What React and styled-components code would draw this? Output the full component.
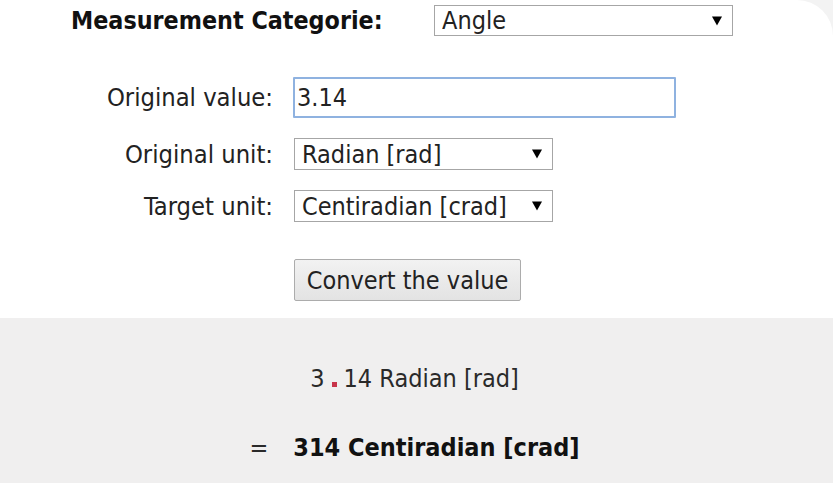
import React from "react";
import styled, { createGlobalStyle } from "styled-components";

const GlobalStyle = createGlobalStyle`
  html, body {
    margin: 0;
    padding: 0;
    background: #f3f3f3;
  }
  body {
    font-family: "DejaVu Sans Condensed", "DejaVu Sans", sans-serif;
    color: #222;
  }
`;

const FONT = `"DejaVu Sans Condensed", "DejaVu Sans", sans-serif`;

const Page = styled.div`
  width: 833px;
  height: 483px;
  display: flex;
  flex-direction: column;
  overflow: hidden;
`;

const Top = styled.section`
  background: #ffffff;
  height: 318px;
  border-top-right-radius: 36px;
  display: flex;
  flex-direction: column;
`;

const CategoryRow = styled.div`
  display: flex;
  align-items: center;
  padding: 5px 0 0 71px;
  height: 31px;
`;

const CategoryLabel = styled.label`
  width: 363px;
  font-family: ${FONT};
  font-weight: bold;
  font-size: 24.8px;
  color: #111;
`;

const Form = styled.div`
  display: grid;
  grid-template-columns: 273px 1fr;
  column-gap: 20px;
  align-items: center;
  margin-top: 41px;
`;

const Label = styled.label`
  text-align: right;
  font-family: ${FONT};
  font-size: 25.3px;
  color: #222;
  margin-top: ${(p) => p.$mt || 0}px;
`;

const Field = styled.div`
  margin-top: ${(p) => p.$mt || 0}px;
  display: flex;
`;

const TextInput = styled.input`
  box-sizing: border-box;
  width: 383px;
  height: 41px;
  border: 2px solid #8fb2e0;
  border-radius: 1px;
  padding: 0 0 0 2px;
  font-family: ${FONT};
  font-size: 25px;
  color: #222;
  outline: none;
  background: #fff;
  caret-color: #000;
`;

const SelectWrap = styled.div`
  position: relative;
  width: ${(p) => p.$w}px;
  height: ${(p) => p.$h}px;
  margin-left: ${(p) => p.$ml || 0}px;
`;

const Select = styled.select`
  appearance: none;
  -webkit-appearance: none;
  box-sizing: border-box;
  width: 100%;
  height: 100%;
  border: 1px solid #a6a6a6;
  border-radius: 0;
  background: #fff;
  padding: 0 0 0 ${(p) => p.$pl || 7}px;
  font-family: ${FONT};
  font-size: 25px;
  color: #222;
  outline: none;
`;

const Arrow = styled.span`
  position: absolute;
  right: 11px;
  top: 50%;
  transform: translateY(-50%);
  width: 0;
  height: 0;
  border-left: 5px solid transparent;
  border-right: 5px solid transparent;
  border-top: 9px solid #000;
  pointer-events: none;
`;

const Button = styled.button`
  box-sizing: border-box;
  height: 42px;
  width: 100%;
  padding: 0 11px;
  border: 1px solid #acacac;
  border-radius: 2px;
  background: linear-gradient(#f2f2f2, #e3e3e3);
  font-family: ${FONT};
  font-size: 25px;
  color: #222;
`;

const Result = styled.section`
  flex: 1;
  background: #f0efef;
  display: flex;
  flex-direction: column;
  align-items: center;
  padding-top: 44px;
  gap: 35px;
`;

const Line = styled.div`
  font-family: ${FONT};
  font-size: 25px;
  color: #2a2a2a;
  font-weight: ${(p) => (p.$bold ? "bold" : "normal")};
  height: 34px;
  line-height: 34px;
  white-space: pre;
  margin-right: 4px;
`;

const Dot = styled.span`
  display: inline-block;
  width: 5px;
  height: 5px;
  background: #c8344a;
  margin: 0 7px 0 7px;
  vertical-align: baseline;
`;

const Eq = styled.span`
  font-weight: normal;
  margin-right: 25px;
`;

const Strong = styled.span`
  color: #111;
`;

function Dropdown({ w, h, ml, value, options }) {
  return (
    <SelectWrap $w={w} $h={h} $ml={ml}>
      <Select defaultValue={value}>
        {options.map((o) => (
          <option key={o}>{o}</option>
        ))}
      </Select>
      <Arrow />
    </SelectWrap>
  );
}

export default function App() {
  return (
    <>
      <GlobalStyle />
      <Page>
        <Top>
          <CategoryRow>
            <CategoryLabel>Measurement Categorie:</CategoryLabel>
            <Dropdown w={299} h={31} value="Angle" options={["Angle", "Length", "Mass"]} />
          </CategoryRow>
          <Form>
            <Label>Original value:</Label>
            <Field>
              <TextInput defaultValue="3.14" />
            </Field>
            <Label $mt={20}>Original unit:</Label>
            <Field $mt={20}>
              <Dropdown
                w={259}
                h={32}
                ml={1}
                value="Radian [rad]"
                options={["Radian [rad]", "Degree [°]", "Centiradian [crad]"]}
              />
            </Field>
            <Label $mt={20}>Target unit:</Label>
            <Field $mt={20}>
              <Dropdown
                w={259}
                h={32}
                ml={1}
                value="Centiradian [crad]"
                options={["Radian [rad]", "Degree [°]", "Centiradian [crad]"]}
              />
            </Field>
            <span />
            <Field $mt={37}>
              <SelectWrap $w={227} $h={42} $ml={1}>
                <Button>Convert the value</Button>
              </SelectWrap>
            </Field>
          </Form>
        </Top>
        <Result>
          <Line>
            3<Dot />14 Radian [rad]
          </Line>
          <Line $bold>
            <Eq>=</Eq>
            <Strong>314 Centiradian [crad]</Strong>
          </Line>
        </Result>
      </Page>
    </>
  );
}
